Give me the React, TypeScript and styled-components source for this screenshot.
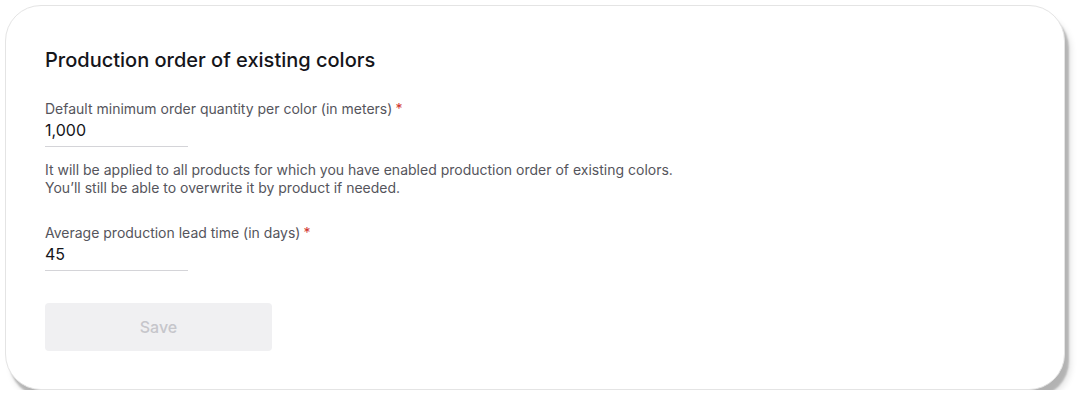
import styled, { createGlobalStyle } from 'styled-components';

const Global = createGlobalStyle`
    body{
        margin:0;
        background:#fff;
        font-family:Inter, "Noto Sans", sans-serif;
        color:#1a1a1f;
    }
`

const Field = ({ label, value }: { label: string; value: string }) => (
    <FieldWrap>
        <Label>{label}<Star>*</Star></Label>
        <Value>{value}</Value>
    </FieldWrap>
)

const App = () => {
    return (
        <>
            <Global />
            <Card>
                <Title>Production order of existing colors</Title>
                <Field label="Default minimum order quantity per color (in meters)" value="1,000" />
                <Help>
                    It will be applied to all products for which you have enabled production order of existing colors.<br />
                    You’ll still be able to overwrite it by product if needed.
                </Help>
                <Field label="Average production lead time (in days)" value="45" />
                <SaveButton disabled>Save</SaveButton>
            </Card>
        </>
    )
}

const Card = styled.div`
    box-sizing:border-box;
    margin:5px 0 0 5px;
    width:1060px;
    height:385px;
    padding:42px 39px 0 39px;
    background:#fff;
    border:1px solid #e4e4e4;
    border-radius:36px;
    box-shadow:4px 7px 2px rgba(0,0,0,0.22), 6px 10px 6px rgba(0,0,0,0.1);
    display:flex;
    flex-direction:column;
    align-items:flex-start;
`

const Title = styled.h2`
    margin:0 0 28px 0;
    font-size:20px;
    line-height:24px;
    font-weight:500;
    color:#15151a;
`

const FieldWrap = styled.div`
    display:flex;
    flex-direction:column;
`

const Label = styled.div`
    font-size:14px;
    line-height:18px;
    color:#55555c;
`

const Star = styled.span`
    color:#d0342c;
    margin-left:3px;
`

const Value = styled.div`
    width:143px;
    font-size:16px;
    line-height:24px;
    padding-bottom:4px;
    border-bottom:1px solid #d4d4d8;
    color:#15151a;
`

const Help = styled.p`
    margin:14px 0 27px 0;
    font-size:14px;
    line-height:18px;
    color:#55555c;
`

const SaveButton = styled.button`
    margin-top:32px;
    width:227px;
    height:48px;
    border:none;
    border-radius:4px;
    background:#f0f0f2;
    color:#c6c6cb;
    font-family:Inter, "Noto Sans", sans-serif;
    font-size:16px;
    font-weight:500;
`

export default App
